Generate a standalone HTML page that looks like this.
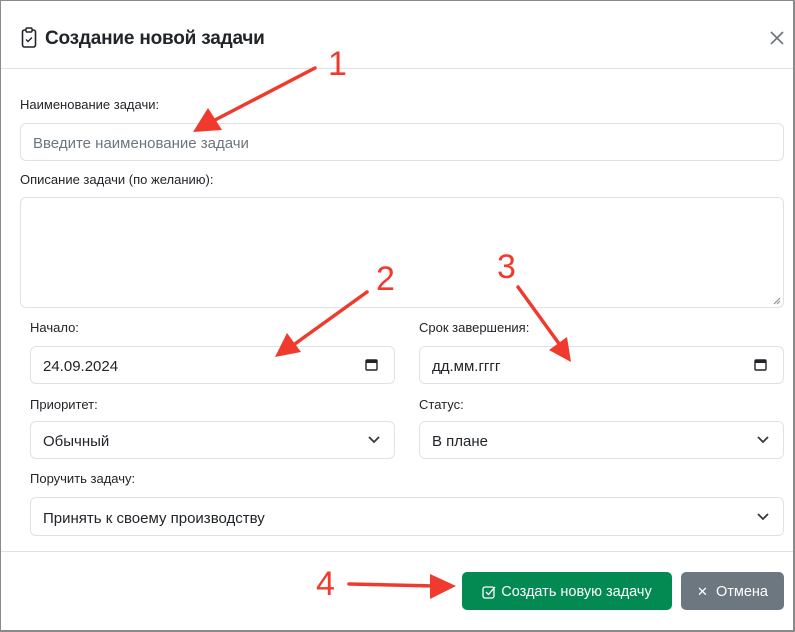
<!DOCTYPE html>
<html><head><meta charset="utf-8"><style>
*{box-sizing:border-box;margin:0;padding:0}
body{width:795px;height:632px;background:#fff;font-family:"Liberation Sans","DejaVu Sans",sans-serif;color:#212529;position:relative;overflow:hidden}
.frame{position:absolute;left:0;top:0;width:795px;height:632px;border:1px solid #8a8a8a;border-right:2px solid #8a8a8a;border-bottom:2px solid #8a8a8a}
.abs{position:absolute}
.lbl{position:absolute;font-size:13px;color:#212529}
.in{position:absolute;border:1px solid #dee2e6;border-radius:6px;background:#fff;font-size:15px;padding-left:12px;padding-top:3px;display:flex;align-items:center}
.chev{position:absolute;right:14px;top:50%;margin-top:-5px}
.hr{position:absolute;left:1px;right:2px;height:1px;background:#dee2e6}
.btn{position:absolute;border-radius:5px;color:#fff;font-size:14.5px;display:flex;align-items:center;justify-content:center;padding-top:2px}
</style></head><body>
<div class="frame"></div>
<svg class="abs" style="left:21px;top:27px" width="16" height="22" viewBox="0 0 16 22"><rect x="1.5" y="3" width="13" height="17" rx="2" fill="none" stroke="#212529" stroke-width="1.6"/><rect x="5" y="1" width="6" height="4" rx="1" fill="#fff" stroke="#212529" stroke-width="1.4"/><path d="M5 12.5l2 2 4-4" fill="none" stroke="#212529" stroke-width="1.4"/></svg>
<div class="abs" style="left:45px;top:28px;font-size:19px;font-weight:bold;color:#212529;letter-spacing:-0.2px">Создание новой задачи</div>
<svg class="abs" style="left:769px;top:30px" width="16" height="16"><path d="M2 2l12 12M14 2L2 14" stroke="#6c757d" stroke-width="1.6"/></svg>
<div class="hr" style="top:68px"></div>
<div class="lbl" style="left:20px;top:97px">Наименование задачи:</div>
<div class="in" style="left:20px;top:123px;width:764px;height:38px;color:#6c757d">Введите наименование задачи</div>
<div class="lbl" style="left:20px;top:172px">Описание задачи (по желанию):</div>
<div class="in" style="left:20px;top:197px;width:764px;height:111px"></div>
<svg class="abs" style="left:773px;top:297px" width="8" height="8"><path d="M1 7L7 1M4 7L7 4" stroke="#888" stroke-width="1"/></svg>
<div class="lbl" style="left:30px;top:320px">Начало:</div>
<div class="in" style="left:30px;top:346px;width:365px;height:38px">24.09.2024</div>
<svg class="abs" style="left:365px;top:358px" width="13" height="13"><rect x="1" y="2" width="11" height="10" rx="1" fill="none" stroke="#212529" stroke-width="1.4"/><rect x="1" y="2" width="11" height="3" fill="#212529"/></svg>
<div class="lbl" style="left:419px;top:320px">Срок завершения:</div>
<div class="in" style="left:419px;top:346px;width:365px;height:38px">дд.мм.гггг</div>
<svg class="abs" style="left:754px;top:358px" width="13" height="13"><rect x="1" y="2" width="11" height="10" rx="1" fill="none" stroke="#212529" stroke-width="1.4"/><rect x="1" y="2" width="11" height="3" fill="#212529"/></svg>
<div class="lbl" style="left:30px;top:397px">Приоритет:</div>
<div class="in" style="left:30px;top:421px;width:365px;height:38px">Обычный<svg class="chev" width="12" height="10"><path d="M1 2l5 5 5-5" fill="none" stroke="#343a40" stroke-width="1.8"/></svg></div>
<div class="lbl" style="left:419px;top:397px">Статус:</div>
<div class="in" style="left:419px;top:421px;width:365px;height:38px">В плане<svg class="chev" width="12" height="10"><path d="M1 2l5 5 5-5" fill="none" stroke="#343a40" stroke-width="1.8"/></svg></div>
<div class="lbl" style="left:30px;top:471px">Поручить задачу:</div>
<div class="in" style="left:30px;top:497px;width:754px;height:39px">Принять к своему производству<svg class="chev" width="12" height="10"><path d="M1 2l5 5 5-5" fill="none" stroke="#343a40" stroke-width="1.8"/></svg></div>
<div class="hr" style="top:551px"></div>
<div class="btn" style="left:462px;top:572px;width:210px;height:38px;background:#028a52"><svg width="14" height="14" style="margin-right:5px"><rect x="1" y="2" width="11" height="11" rx="2" fill="none" stroke="#fff" stroke-width="1.3"/><path d="M4 7l2.5 2.5L13 2" fill="none" stroke="#fff" stroke-width="1.3"/></svg>Создать новую задачу</div>
<div class="btn" style="left:681px;top:572px;width:103px;height:38px;background:#6c7780"><span style="font-size:13px;margin-right:8px">✕</span>Отмена</div>
<svg class="abs" style="left:0;top:0" width="795" height="632">
<g stroke="#f03a2e" stroke-width="3.5" fill="#f03a2e" stroke-linecap="round">
<line x1="315" y1="68" x2="215" y2="120"/><polygon stroke="none" points="193,132 208,108 222,130"/>
<line x1="367" y1="292" x2="292" y2="346"/><polygon stroke="none" points="275,357 287,333 301,352"/>
<line x1="518" y1="287" x2="560" y2="345"/><polygon stroke="none" points="571,362 549,350 567,337"/>
<line x1="349" y1="584" x2="435" y2="586"/><polygon stroke="none" points="456,586 430,574 430,599"/>
</g>
<g fill="#f03a2e" font-family="Liberation Sans,sans-serif" font-size="34">
<text x="328" y="75">1</text><text x="376" y="290">2</text><text x="497" y="278">3</text><text x="316" y="595">4</text>
</g></svg>
</body></html>
